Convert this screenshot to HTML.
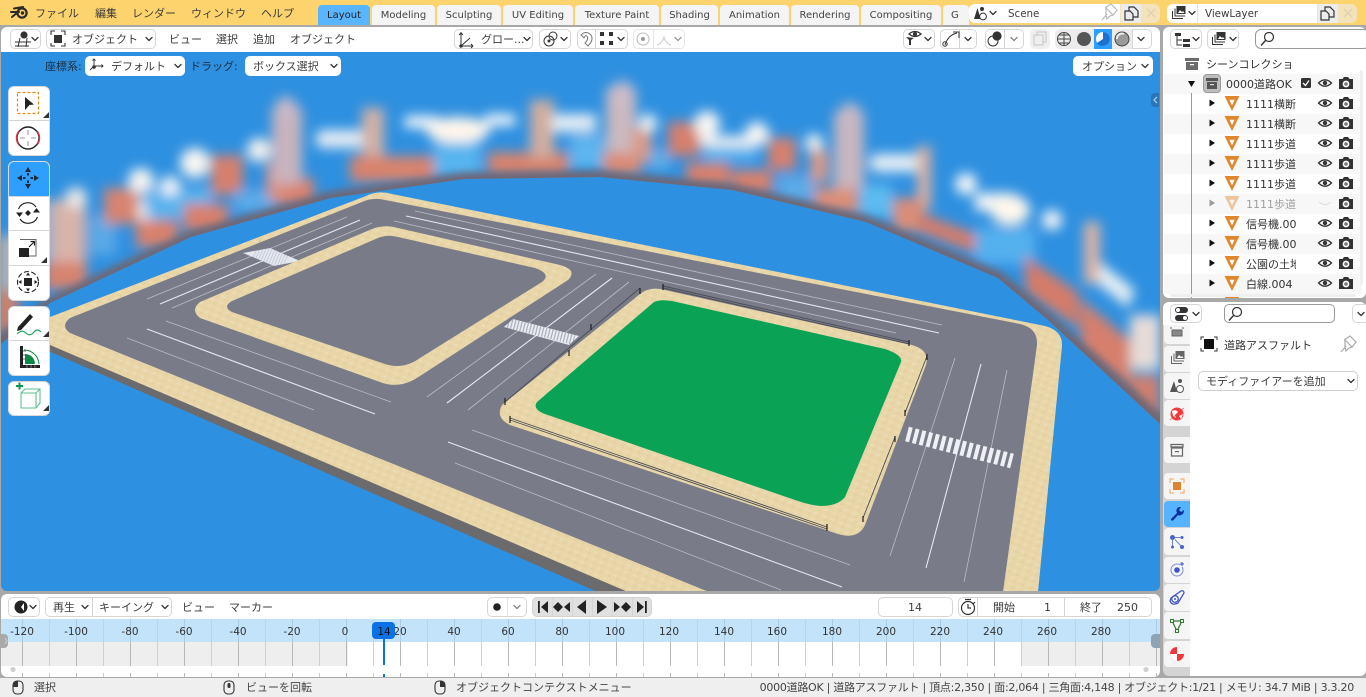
<!DOCTYPE html>
<html lang="ja"><head><meta charset="utf-8"><title>Blender</title>
<style>
html,body{margin:0;padding:0}
body{position:relative;width:1366px;height:697px;overflow:hidden;background:#a8a8a8;font:11px/14px "DejaVu Sans","Noto Sans CJK JP",sans-serif;color:#3c3c3c}
.a{position:absolute;box-sizing:border-box}
.t{position:absolute;white-space:nowrap;font-size:11px;line-height:14px;color:#3c3c3c;margin-top:1px}
.b{position:absolute;box-sizing:border-box;background:#fff;border:1px solid #d6d6d6;border-radius:5px}
.tab{position:absolute;top:5px;height:20px;background:#f4f4f4;border-radius:4px 4px 0 0;text-align:center;line-height:22px;color:#444;font-size:10px}
.c{position:absolute;left:1246px;width:50px;overflow:hidden;white-space:nowrap;line-height:14px;color:#333;margin-top:1px}
.r{position:absolute;left:1164px;width:198px;height:20px;background:#f7f7f7}
.pt{position:absolute;left:1164px;width:26px;background:#f5f5f5;border-radius:4px 0 0 4px}
.tool{position:absolute;left:8px;width:42px;background:#fff;border:1px solid #d9d9d9;border-radius:6px;box-sizing:border-box}
.div{position:absolute;background:#d5d5d5}
</style></head><body>

<!-- top bar -->
<div class="a" style="left:0;top:0;width:1366px;height:25px;background:#fdd36d"></div>
<span class="t" style="left:35px;top:6px">ファイル</span>
<span class="t" style="left:95px;top:6px">編集</span>
<span class="t" style="left:132px;top:6px">レンダー</span>
<span class="t" style="left:191px;top:6px">ウィンドウ</span>
<span class="t" style="left:261px;top:6px">ヘルプ</span>
<div class="tab" style="left:318px;width:52px;background:#5ab5ff;color:#222">Layout</div>
<div class="tab" style="left:372px;width:63px">Modeling</div>
<div class="tab" style="left:437px;width:64px">Sculpting</div>
<div class="tab" style="left:503px;width:70px">UV Editing</div>
<div class="tab" style="left:575px;width:84px">Texture Paint</div>
<div class="tab" style="left:661px;width:57px">Shading</div>
<div class="tab" style="left:720px;width:69px">Animation</div>
<div class="tab" style="left:791px;width:68px">Rendering</div>
<div class="tab" style="left:861px;width:80px">Compositing</div>
<div class="tab" style="left:943px;width:18px;text-align:left;padding-left:8px;overflow:hidden">G</div>

<!-- scene / view layer fields -->
<div class="a" style="left:969px;top:4px;width:191px;height:19px;background:#f3e3ba;border-radius:6px"></div>
<div class="a" style="left:969px;top:4px;width:32px;height:19px;background:#fff;border-radius:6px 0 0 6px"></div>
<div class="a" style="left:1001px;top:4px;width:119px;height:19px;background:#fff"></div>
<div class="a" style="left:1121px;top:4px;width:20px;height:19px;background:#ececec"></div>
<span class="t" style="left:1008px;top:6px;font-size:10.3px">Scene</span>
<div class="a" style="left:1167px;top:4px;width:190px;height:19px;background:#f3e3ba;border-radius:6px"></div>
<div class="a" style="left:1167px;top:4px;width:30px;height:19px;background:#fff;border-radius:6px 0 0 6px"></div>
<div class="a" style="left:1198px;top:4px;width:119px;height:19px;background:#fff"></div>
<div class="a" style="left:1318px;top:4px;width:20px;height:19px;background:#ececec"></div>
<span class="t" style="left:1205px;top:6px;font-size:10.3px">ViewLayer</span>

<!-- 3D viewport scene -->
<div class="a" style="left:1px;top:27px;width:1159px;height:564px;background:#2e90e0;border-radius:6px;overflow:hidden">
<svg width="1159" height="564" viewBox="1 27 1159 564" style="position:absolute;left:0;top:0">
<defs>
<clipPath id="sky"><path d="M0,52H1160V424L1048,320L998,278L866,222L732,190L600,177L465,179L331,198L191,237L50,303L0,345Z"/></clipPath>
<filter id="bl" x="-10%" y="-10%" width="120%" height="120%"><feGaussianBlur stdDeviation="6"/></filter>
<filter id="bl2" x="-10%" y="-10%" width="120%" height="120%"><feGaussianBlur stdDeviation="4"/></filter>
<pattern id="sd" width="9" height="7" patternUnits="userSpaceOnUse" patternTransform="rotate(22)"><rect width="9" height="7" fill="#e8d6a9"/><rect x="1" y="1" width="4" height="2" fill="#ecdcb4"/><rect x="5" y="4" width="3" height="2" fill="#e3d09f"/></pattern>
</defs>
<g clip-path="url(#sky)"><g filter="url(#bl)">
<!-- left -->
<rect x="0" y="235" width="14" height="70" fill="#cdb6ae"/>
<rect x="-5" y="290" width="24" height="44" fill="#c9816f"/>
<rect x="18" y="200" width="30" height="60" fill="#8fb7d5"/>
<rect x="50" y="200" width="36" height="66" fill="#d8b3aa"/>
<rect x="45" y="262" width="42" height="28" fill="#d7836e"/>
<circle cx="76" cy="198" r="11" fill="#e9e6e4"/>
<rect x="90" y="215" width="26" height="40" fill="#5aa9e6"/>
<rect x="104" y="188" width="36" height="36" fill="#d7846f"/>
<circle cx="141" cy="181" r="13" fill="#f6f4f2"/>
<rect x="138" y="200" width="18" height="30" fill="#f0eeee"/>
<rect x="146" y="188" width="66" height="30" fill="#59b4ee"/>
<circle cx="170" cy="186" r="10" fill="#f2f4f6"/><circle cx="195" cy="163" r="15" fill="#f8f5f2"/>
<rect x="211" y="155" width="32" height="40" fill="#d5806d"/>
<rect x="136" y="220" width="42" height="28" fill="#d9816c"/>
<rect x="184" y="204" width="44" height="28" fill="#d9806b"/>
<rect x="235" y="190" width="40" height="22" fill="#5cabe8"/>
<rect x="274" y="178" width="40" height="28" fill="#d9816c"/>
<rect x="266" y="163" width="22" height="34" fill="#da8f7e"/>
<circle cx="259" cy="150" r="12" fill="#f2f1f0"/>
<rect x="272" y="108" width="30" height="76" fill="#c9b3bd"/>
<circle cx="286" cy="108" r="11" fill="#c9b8c6"/>
<rect x="316" y="130" width="54" height="18" rx="7" fill="#e3ecf4"/>
<rect x="362" y="108" width="22" height="56" fill="#d2b0a6"/>
<rect x="350" y="156" width="86" height="26" fill="#d8836d"/>
<rect x="434" y="140" width="46" height="36" fill="#56b5ef"/>
<!-- middle -->
<rect x="404" y="116" width="36" height="12" rx="5" fill="#f5f8fb"/>
<ellipse cx="458" cy="130" rx="32" ry="13" fill="#fff6ec"/>
<rect x="484" y="114" width="32" height="12" rx="5" fill="#eff5fa"/>
<rect x="488" y="152" width="80" height="24" fill="#d8836d"/>
<rect x="530" y="100" width="24" height="58" fill="#d2ad9f"/>
<rect x="552" y="114" width="44" height="18" fill="#e6eef5"/>
<rect x="570" y="136" width="34" height="32" fill="#5cb6ef"/>
<rect x="606" y="88" width="30" height="76" fill="#cbb9c0"/>
<circle cx="622" cy="92" r="11" fill="#cbbcc8"/>
<rect x="603" y="153" width="38" height="22" fill="#dc8a72"/>
<rect x="632" y="128" width="20" height="34" fill="#d89a88"/>
<circle cx="648" cy="123" r="9" fill="#f3f4f4"/>
<rect x="650" y="150" width="20" height="20" fill="#5aaee9"/>
<rect x="668" y="122" width="32" height="34" fill="#d67f6d"/>
<circle cx="707" cy="124" r="13" fill="#f8f6f4"/><circle cx="757" cy="134" r="12" fill="#f8f6f4"/>
<rect x="700" y="136" width="60" height="10" fill="#f5f5f3"/>
<rect x="704" y="146" width="52" height="14" fill="#5fb6ef"/>
<rect x="686" y="163" width="44" height="24" fill="#da816c"/>
<rect x="732" y="170" width="40" height="24" fill="#d9816c"/>
<rect x="768" y="138" width="28" height="32" fill="#d6806e"/>
<rect x="778" y="176" width="36" height="26" fill="#5cabe8"/>
<circle cx="814" cy="143" r="9" fill="#f4f2f0"/>
<rect x="810" y="150" width="18" height="32" fill="#da9a8a"/>
<rect x="834" y="112" width="30" height="80" fill="#c8b6bf"/>
<circle cx="850" cy="114" r="11" fill="#c8b8c4"/>
<rect x="814" y="188" width="44" height="26" fill="#dd8f78"/>
<rect x="860" y="185" width="32" height="32" fill="#5cbcf0"/>
<rect x="870" y="154" width="50" height="18" rx="7" fill="#e6eef4"/>
<rect x="917" y="146" width="14" height="64" fill="#d9b0a2"/>
<rect x="893" y="198" width="30" height="34" fill="#da8d78"/>
<path d="M918,212L977,234V254L918,232Z" fill="#d57d6a"/>
<!-- right -->
<circle cx="966" cy="184" r="11" fill="#f3f5f7"/>
<rect x="975" y="193" width="40" height="18" fill="#f2f4f4"/>
<ellipse cx="1010" cy="210" rx="20" ry="15" fill="#fff7ec"/>
<circle cx="1052" cy="220" r="10" fill="#f2f4f6"/>
<rect x="975" y="228" width="60" height="36" fill="#55b0ee"/>
<path d="M1025,256L1078,292V328L1025,292Z" fill="#d57c69"/>
<rect x="1084" y="222" width="16" height="62" fill="#dcb4a6"/>
<path d="M1100,262L1135,290L1128,308L1098,284Z" fill="#e6eef3"/>
<path d="M1080,298L1130,340V392L1080,350Z" fill="#d67f6c"/>
<rect x="1130" y="315" width="30" height="55" fill="#e7dcd8"/>
<rect x="1130" y="375" width="30" height="45" fill="#cf8070"/>
</g>
<g filter="url(#bl2)"><path d="M-10,350L50,305L191,238L331,199L465,180L600,178L732,191L866,223L998,279L1048,321L1170,432" fill="none" stroke="#6f6673" stroke-width="15"/></g>
</g>
<!-- slab -->
<path d="M44,338L640,590V593H600L44,349Z" fill="#6b6a6d"/>
<path d="M366,196Q378,190 392,194L1045,326Q1063,331 1062,346L1038,592H628L50,345L28,331L50,317Z" fill="url(#sd)"/>
<path d="M362,202Q373,197 385,200L1020,324Q1038,328 1037,345L1003,592H709L70,333Q60,326 70,318Z" fill="#797c88"/>
<g fill="none">
<g stroke-width=".8" stroke="#cfd3dc" opacity=".75">
<path d="M147,299L347,217M172,308L372,223"/>
<path d="M415,211L942,325M394,221L896,333"/>
<path d="M166,321L391,402M127,338L314,410"/>
<path d="M427,397L596,274M468,410L629,282"/>
<path d="M472,430L850,565M455,463L781,590"/>
<path d="M955,358L890,556M1007,370L964,582"/>
</g>
<g stroke-width="1.1" stroke="#e4e8f0">
<path d="M160,304L360,220M406,216L939,333M147,329L375,414M447,403L612,278M448,442L842,587M981,364L926,568"/>
</g></g>
<!-- crosswalks -->
<path d="M243,253L270,248L300,261L274,266Z" fill="#e3e7f0"/>
<path d="M256,250L287,263" stroke="#797c88" stroke-width="22" stroke-dasharray=".8 2" opacity=".3"/>
<path d="M513,319L579,336L569,345L504,327Z" fill="#e9ecf3"/>
<path d="M508,323L574,340" stroke="#797c88" stroke-width="10" stroke-dasharray="1.2 2" opacity=".55"/>
<path d="M907,434L1012,461" stroke="#eef0f6" stroke-width="15" stroke-dasharray="4 3"/>
<!-- blocks -->
<path d="M372,229Q385,224 398,228L560,265Q578,270 568,280L420,376Q400,390 380,382L200,318Q190,310 200,302Z" fill="url(#sd)"/>
<path d="M378,238Q388,234 398,237L535,268Q552,274 542,282L420,358Q403,370 385,364L232,312Q222,307 232,301Z" fill="#797c88"/>
<path d="M640,294Q650,286 665,290L912,345Q930,350 926,365L865,525Q858,540 838,534L510,425Q495,418 502,405Z" fill="url(#sd)"/>
<path d="M537,402L654,302Q660,299 672,301L885,349Q903,355 901,362L845,497Q838,506 820,506Q810,505 798,501L545,414Q532,409 537,402Z" fill="#0aa356"/>
<!-- fences -->
<g fill="none" stroke="#4a4c55" stroke-width=".9">
<path d="M640,288L505,402M663,286L909,342M663,288L909,344M927,356L905,413M895,437L863,518M510,418L827,527M510,420L827,529"/>
</g>
<g stroke="#1e1e1e" stroke-width="1.2">
<path d="M640,288v6M663,284v6M909,340v6M927,354v6M905,410v6M895,436v6M863,516v6M510,416v7M827,524v7M505,398v7M591,324v6M569,350v6"/>
</g>
</svg></div>

<!-- viewport header -->
<div class="a" style="left:1px;top:27px;width:1159px;height:25px;background:#fff;border-radius:6px 6px 0 0"></div>
<div class="b" style="left:10px;top:29px;width:31px;height:20px"></div>
<div class="b" style="left:46px;top:29px;width:110px;height:20px"></div>
<span class="t" style="left:72px;top:32px">オブジェクト</span>
<span class="t" style="left:169px;top:32px">ビュー</span>
<span class="t" style="left:216px;top:32px">選択</span>
<span class="t" style="left:253px;top:32px">追加</span>
<span class="t" style="left:290px;top:32px">オブジェクト</span>
<div class="b" style="left:454px;top:29px;width:79px;height:20px"></div>
<span class="t" style="left:481px;top:32px">グロー...</span>
<div class="b" style="left:539px;top:29px;width:32px;height:20px"></div>
<div class="b" style="left:577px;top:29px;width:51px;height:20px"></div>
<div class="div" style="left:595px;top:30px;width:1px;height:18px"></div>
<div class="b" style="left:633px;top:29px;width:52px;height:20px;border-color:#e6e6e6"></div>
<div class="div" style="left:653px;top:30px;width:1px;height:18px;background:#e6e6e6"></div>
<div class="b" style="left:903px;top:29px;width:32px;height:20px"></div>
<div class="b" style="left:940px;top:29px;width:37px;height:20px"></div>
<div class="div" style="left:959px;top:30px;width:1px;height:18px"></div>
<div class="b" style="left:985px;top:29px;width:39px;height:20px"></div>
<div class="div" style="left:1004px;top:30px;width:1px;height:18px"></div>
<div class="a" style="left:1030px;top:29px;width:20px;height:20px;background:#efefef;border-radius:5px"></div>
<div class="a" style="left:1055px;top:29px;width:78px;height:20px;background:#ececec;border-radius:5px 0 0 5px"></div>
<div class="a" style="left:1094px;top:29px;width:18px;height:20px;background:#2e9fff"></div>
<div class="b" style="left:1132px;top:29px;width:20px;height:20px;border-radius:0 5px 5px 0"></div>

<!-- tool settings -->
<span class="t" style="left:45px;top:59px;color:#1c2c3c">座標系:</span>
<div class="b" style="left:85px;top:56px;width:100px;height:20px;border:0"></div>
<span class="t" style="left:111px;top:59px">デフォルト</span>
<span class="t" style="left:190px;top:59px;color:#1c2c3c">ドラッグ:</span>
<div class="b" style="left:245px;top:56px;width:96px;height:20px;border:0"></div>
<span class="t" style="left:253px;top:59px">ボックス選択</span>
<div class="b" style="left:1073px;top:56px;width:80px;height:20px;border:0"></div>
<span class="t" style="left:1082px;top:59px">オプション</span>
<div class="a" style="left:1151px;top:93px;width:8px;height:14px;background:#2775bb;border-radius:4px 0 0 4px"></div>

<!-- tool panels -->
<div class="tool" style="top:86px;height:70px"></div>
<div class="tool" style="top:161px;height:140px"></div>
<div class="a" style="left:9px;top:162px;width:40px;height:34px;background:#2e9fff;border-radius:5px 5px 0 0"></div>
<div class="tool" style="top:306px;height:70px"></div>
<div class="tool" style="top:381px;height:35px"></div>
<div class="div" style="left:9px;top:120px;width:40px;height:1px"></div>
<div class="div" style="left:9px;top:196px;width:40px;height:1px"></div>
<div class="div" style="left:9px;top:230px;width:40px;height:1px"></div>
<div class="div" style="left:9px;top:265px;width:40px;height:1px"></div>
<div class="div" style="left:9px;top:340px;width:40px;height:1px"></div>

<!-- outliner -->
<div class="a" style="left:1163px;top:27px;width:203px;height:271px;background:#fff;border-radius:6px;overflow:hidden"></div>
<div class="b" style="left:1170px;top:29px;width:32px;height:20px"></div>
<div class="b" style="left:1207px;top:29px;width:32px;height:20px"></div>
<div class="b" style="left:1255px;top:29px;width:115px;height:20px;border-color:#999;border-radius:6px"></div>
<div class="r" style="top:74px"></div><div class="r" style="top:114px"></div><div class="r" style="top:154px"></div><div class="r" style="top:194px"></div><div class="r" style="top:234px"></div><div class="r" style="top:274px"></div>
<div class="a" style="left:1203px;top:74px;width:18px;height:19px;background:#bdbdbd;border:1px solid #9a9a9a;border-radius:4px"></div>
<span class="t" style="left:1206px;top:57px;color:#333">シーンコレクショ</span>
<span class="t" style="left:1226px;top:77px;color:#333">0000道路OK</span>
<div class="c" style="top:97px">1111横断</div>
<div class="c" style="top:117px">1111横断</div>
<div class="c" style="top:137px">1111歩道</div>
<div class="c" style="top:157px">1111歩道</div>
<div class="c" style="top:177px">1111歩道</div>
<div class="c" style="top:197px;opacity:.45">1111歩道</div>
<div class="c" style="top:217px">信号機.00</div>
<div class="c" style="top:237px">信号機.00</div>
<div class="c" style="top:257px">公園の土地</div>
<div class="c" style="top:277px">白線.004</div>
<div class="div" style="left:1191px;top:93px;width:1px;height:205px;background:#9a9a9a"></div>
<div class="a" style="left:1360px;top:70px;width:3px;height:215px;background:#efefef;border-radius:2px"></div>
<div class="a" style="left:1170px;top:294px;width:186px;height:3px;background:#efefef;border-radius:2px"></div>

<!-- properties -->
<div class="a" style="left:1163px;top:302px;width:203px;height:374px;background:#d4d4d4;border-radius:6px;overflow:hidden"></div>
<div class="a" style="left:1190px;top:325px;width:176px;height:351px;background:#fff;border-radius:0 0 6px 0"></div>
<div class="a" style="left:1163px;top:302px;width:203px;height:23px;background:#fff;border-radius:6px 6px 0 0"></div>
<div class="b" style="left:1170px;top:304px;width:32px;height:19px"></div>
<div class="b" style="left:1224px;top:304px;width:111px;height:19px;border-color:#999;border-radius:5px"></div>
<div class="b" style="left:1352px;top:304px;width:20px;height:19px"></div>
<div class="pt" style="top:325px;height:19px;border-radius:0 0 0 4px"></div>
<div class="pt" style="top:346px;height:26px"></div>
<div class="pt" style="top:373px;height:26px"></div>
<div class="pt" style="top:400px;height:26px"></div>
<div class="pt" style="top:437px;height:26px"></div>
<div class="pt" style="top:473px;height:26px"></div>
<div class="pt" style="top:501px;height:26px;background:#55b3ff"></div>
<div class="pt" style="top:528px;height:27px"></div>
<div class="pt" style="top:557px;height:26px"></div>
<div class="pt" style="top:584px;height:27px"></div>
<div class="pt" style="top:612px;height:27px"></div>
<div class="pt" style="top:641px;height:26px"></div>
<span class="t" style="left:1224px;top:338px;color:#333">道路アスファルト</span>
<div class="b" style="left:1198px;top:371px;width:160px;height:20px;border-color:#cfcfcf"></div>
<span class="t" style="left:1206px;top:374px">モディファイアーを追加</span>

<!-- timeline -->
<div class="a" style="left:1px;top:594px;width:1159px;height:83px;background:#fff;border-radius:6px;overflow:hidden"></div>
<div class="a" style="left:1px;top:619px;width:1159px;height:23px;background:#c3e3fb"></div>
<div class="a" style="left:1px;top:642px;width:347px;height:24px;background:#eeeeee"></div>
<div class="a" style="left:1021px;top:642px;width:139px;height:24px;background:#eeeeee"></div>
<svg class="a" width="1159" height="58" viewBox="1 619 1159 58" style="left:1px;top:619px">
<defs>
<pattern id="p1" x="22" y="0" width="54" height="10" patternUnits="userSpaceOnUse"><rect x="0" width="1" height="10" fill="#a9cde8"/><rect x="27" width="1" height="10" fill="#b3d6ef"/></pattern>
<pattern id="p2" x="22" y="0" width="54" height="10" patternUnits="userSpaceOnUse"><rect x="0" width="1" height="10" fill="#b8b8b8"/><rect x="27" width="1" height="10" fill="#cfcfcf"/></pattern>
</defs>
<rect x="1" y="619" width="1159" height="23" fill="url(#p1)"/>
<rect x="1" y="642" width="1159" height="24" fill="url(#p2)"/>
<rect x="1" y="673" width="1159" height="4" fill="url(#p2)"/>
<rect x="9" y="666" width="1142" height="7" rx="3.5" fill="#fff"/>
<circle cx="13" cy="669.5" r="2.6" fill="#d0d0d0"/><circle cx="1146" cy="669.5" r="2.6" fill="#d0d0d0"/>
<g font-family="'DejaVu Sans',sans-serif" font-size="10.5" fill="#333" text-anchor="middle">
<text x="22" y="635">-120</text><text x="76" y="635">-100</text><text x="130" y="635">-80</text><text x="184" y="635">-60</text><text x="238" y="635">-40</text><text x="292" y="635">-20</text><text x="345" y="635">0</text><text x="400" y="635">20</text><text x="454" y="635">40</text><text x="508" y="635">60</text><text x="562" y="635">80</text><text x="615" y="635">100</text><text x="669" y="635">120</text><text x="724" y="635">140</text><text x="777" y="635">160</text><text x="832" y="635">180</text><text x="886" y="635">200</text><text x="940" y="635">220</text><text x="993" y="635">240</text><text x="1047" y="635">260</text><text x="1101" y="635">280</text>
</g>
<rect x="372" y="622" width="23" height="17" rx="4" fill="#0a72e6"/>
<rect x="383" y="639" width="2" height="26" fill="#0a72e6"/><rect x="383" y="674" width="2" height="3" fill="#0a72e6"/>
<text x="384" y="635" font-family="'DejaVu Sans',sans-serif" font-size="10.5" fill="#111" text-anchor="middle">14</text>
</svg>
<div class="b" style="left:8px;top:597px;width:32px;height:20px"></div>
<div class="b" style="left:45px;top:597px;width:127px;height:20px"></div>
<div class="div" style="left:92px;top:598px;width:1px;height:18px"></div>
<span class="t" style="left:53px;top:600px">再生</span>
<span class="t" style="left:99px;top:600px">キーイング</span>
<span class="t" style="left:182px;top:600px">ビュー</span>
<span class="t" style="left:229px;top:600px">マーカー</span>
<div class="b" style="left:487px;top:597px;width:40px;height:20px"></div>
<div class="div" style="left:507px;top:598px;width:1px;height:18px;background:#e4e4e4"></div>
<div class="a" style="left:532px;top:597px;width:120px;height:20px;background:#e0e0e0;border:1px solid #d2d2d2;border-radius:5px"></div>
<div class="div" style="left:552px;top:598px;width:1px;height:18px"></div><div class="div" style="left:572px;top:598px;width:1px;height:18px"></div><div class="div" style="left:592px;top:598px;width:1px;height:18px"></div><div class="div" style="left:612px;top:598px;width:1px;height:18px"></div><div class="div" style="left:632px;top:598px;width:1px;height:18px"></div>
<div class="b" style="left:878px;top:597px;width:75px;height:20px"></div>
<span class="t" style="left:908px;top:600px">14</span>
<div class="b" style="left:958px;top:597px;width:194px;height:20px"></div>
<div class="div" style="left:977px;top:598px;width:1px;height:18px"></div>
<div class="div" style="left:1064px;top:598px;width:1px;height:18px"></div>
<span class="t" style="left:993px;top:600px">開始</span>
<span class="t" style="left:1044px;top:600px">1</span>
<span class="t" style="left:1080px;top:600px">終了</span>
<span class="t" style="left:1117px;top:600px">250</span>
<div class="a" style="left:0;top:634px;width:8px;height:14px;background:#a9a9a9;border-radius:0 4px 4px 0"></div>
<div class="a" style="left:1151px;top:634px;width:9px;height:14px;background:#8ea4b4;border-radius:4px 0 0 4px"></div>

<!-- status bar -->
<div class="a" style="left:0;top:678px;width:1366px;height:19px;background:#efefef"></div>
<span class="t" style="left:34px;top:680px;color:#444">選択</span>
<span class="t" style="left:246px;top:680px;color:#444">ビューを回転</span>
<span class="t" style="left:456px;top:680px;color:#444">オブジェクトコンテクストメニュー</span>
<span class="t" style="right:12px;top:680px;color:#444;letter-spacing:-.26px">0000道路OK | 道路アスファルト | 頂点:2,350 | 面:2,064 | 三角面:4,148 | オブジェクト:1/21 | メモリ: 34.7 MiB | 3.3.20</span>

<!-- icon layer -->
<svg class="a" width="1366" height="697" viewBox="0 0 1366 697" style="left:0;top:0;pointer-events:none">
<defs>
<path id="ch" d="M-3,-1.5L0,1.5L3,-1.5" fill="none" stroke="#333" stroke-width="1.3" stroke-linecap="round" stroke-linejoin="round"/>
<g id="eye"><path d="M-6.5,0Q0,-6.5 6.5,0Q0,6.5 -6.5,0Z" fill="none" stroke="#333" stroke-width="1.3"/><circle r="2.2" fill="#333"/></g>
<g id="cam"><path d="M-7,-4H-3.5L-2,-6H2L3.5,-4H7V6H-7Z" fill="#333"/><circle cy="1" r="3.4" fill="#fff"/><circle cy="1" r="1.8" fill="#777"/></g>
<path id="tri" d="M-7.5,-7H7.5L0,8Z M-2.6,-3.2L0,2.4L2.6,-3.2Z" fill="#e0862c" fill-rule="evenodd"/>
<path id="arr" d="M-2.5,-3.5L3,0L-2.5,3.5Z" fill="#111"/>
<path id="cn" d="M-3,0L3,0L3,-6Z" fill="#333"/>
</defs>
<!-- blender logo -->
<g fill="none" stroke="#2a2a2a" stroke-linecap="round"><circle cx="22" cy="13" r="4.6" stroke-width="2.2"/><path d="M11,12H19M14,8.5L23,7M12,17L18,12" stroke-width="2"/></g><circle cx="22.5" cy="13" r="1.7" fill="#2a2a2a"/>

<!-- top right -->
<g transform="translate(979,13)"><path d="M-5,6L-1.5,-5L1.5,6Z" fill="#333"/><circle cx="3" cy="-4" r="2" fill="#333"/><circle cx="4" cy="3.5" r="3.4" fill="#fff" stroke="#333"/></g><use href="#ch" x="993" y="13"/>
<path d="M1102,20L1107,14M1106,8L1113,15L1110,16L1107,19L1106,16ZM1105,8L1111,4L1117,10L1113,15" fill="none" stroke="#bbb" stroke-width="1.2"/>
<path d="M1129,11V7H1134L1138,11V17H1133M1125,11H1130L1133,14V20H1125Z" fill="none" stroke="#333" stroke-width="1.2"/>
<path d="M1147,9L1155,17M1155,9L1147,17" stroke="#e2d2ac" stroke-width="1.3"/>
<g transform="translate(1178,13)"><path d="M-6,-2H-5V5H5V6H-6Z M-3.5,-4.5H-2.5V2.500H7V3.500H-3.5Z" fill="#333"/><rect x="-1.500" y="-7" width="9" height="8" fill="#333"/><path d="M0,0L2,-3L4,-1L5,-2L6.500,0Z" fill="#fff"/></g><use href="#ch" x="1192" y="13"/>
<path d="M1325,11V7H1330L1334,11V17H1329M1321,11H1326L1329,14V20H1321Z" fill="none" stroke="#333" stroke-width="1.2"/>
<path d="M1344,9L1352,17M1352,9L1344,17" stroke="#e2d2ac" stroke-width="1.3"/>

<!-- 3D header icons -->
<g stroke="#333" fill="none"><path d="M15,42H31M15,46H29M20,38L18,47M27,38L26,47"/></g><circle cx="24" cy="35" r="3.6" fill="#333"/><use href="#ch" x="35" y="39"/>
<path d="M51,35V31H55M61,31H65V35M65,43V46H61M55,46H51V43" fill="none" stroke="#333" stroke-width="1.1"/><rect x="54" y="35" width="8" height="8" fill="#333"/><use href="#ch" x="149" y="39"/>
<g fill="none" stroke="#333"><path d="M461,32V46H473M461,46L470,38M461,33L459,35M461,33L463,35M473,46L471,44M473,46L471,48"/></g><circle cx="461" cy="46" r="1.700" fill="#333"/><use href="#ch" x="527" y="39"/>
<circle cx="549" cy="41" r="5" fill="none" stroke="#333"/><circle cx="553" cy="36" r="4" fill="none" stroke="#333"/><circle cx="549" cy="41" r="1.5" fill="#333"/><use href="#ch" x="564" y="39"/>
<path d="M581,35Q586,30 591,35Q594,40 588,46L585,43Q589,39 587,36Q585,35 584,38Z" fill="none" stroke="#777"/>
<path d="M600,32h4v4h-4zM609,32h4v4h-4zM600,41h4v4h-4zM609,41h4v4h-4z" fill="#333"/><use href="#ch" x="621" y="39"/>
<circle cx="643" cy="39" r="6" fill="none" stroke="#bbb"/><circle cx="643" cy="39" r="2" fill="#999"/>
<path d="M657,45Q662,44 664,37Q666,44 671,45" fill="none" stroke="#ccc"/><use href="#ch" x="678" y="39" opacity=".5"/>
<g transform="translate(915,37)"><path d="M-6,-3Q0,-8 6,-3Q0,2 -6,-3Z" fill="none" stroke="#333" stroke-width="1.300"/><circle cy="-3" r="2" fill="#333"/><path d="M-9,0L-1,1L-4,3L-4,8L-6,8L-6,3Z" fill="#333"/></g><use href="#ch" x="928" y="39"/>
<path d="M945,45Q948,35 957,33M953,32H959V38" fill="none" stroke="#333"/><circle cx="945" cy="44" r="2.200" fill="none" stroke="#333"/><use href="#ch" x="968" y="39"/>
<circle cx="993" cy="41" r="5" fill="#fff" stroke="#333"/><circle cx="997" cy="36" r="4.600" fill="#333"/><use href="#ch" x="1014" y="39" opacity=".6"/>
<g fill="none" stroke="#c4c4c4"><rect x="1034" y="35" width="9" height="10"/><path d="M1037,35V32H1046V42H1043"/></g>
<g fill="none" stroke="#444"><circle cx="1064" cy="39" r="6.500"/><path d="M1057.500,39H1070.500M1064,32.500V45.500M1059,35H1069M1059,43H1069"/></g>
<circle cx="1084" cy="39" r="7" fill="#555"/>
<circle cx="1103" cy="39" r="7" fill="#fff"/><path d="M1103,39V32A7,7 0 0 1 1103,46Q1098,46 1097,43Z" fill="#1b73cf"/>
<circle cx="1122" cy="39" r="7" fill="#9a9a9a" stroke="#444"/><path d="M1117,39A5,5 0 0 1 1124,34" fill="none" stroke="#eee" stroke-width="2"/>
<use href="#ch" x="1141" y="39"/>

<!-- tool settings icons -->
<g stroke="#333" fill="none" stroke-width=".9"><path d="M94,66V59M92.500,60.500L94,59L95.500,60.500M94,66L90,70M94,66H103M101.500,64.500L103,66L101.500,67.500"/></g><circle cx="94" cy="67" r="1.800" fill="#333"/>
<use href="#ch" x="178" y="66"/><use href="#ch" x="334" y="66"/><use href="#ch" x="1145" y="66"/>
<path d="M1157,97L1154,100L1157,103" fill="none" stroke="#a8c7e2" stroke-width="1.300"/>

<!-- tools -->
<rect x="17.500" y="92.500" width="21" height="21" fill="none" stroke="#e08a10" stroke-width="1.200" stroke-dasharray="3 2"/>
<path d="M25,97L34,104.500L29.500,105L25,110Z" fill="#222"/>
<circle cx="28" cy="138" r="11" fill="none" stroke="#222" stroke-width="1.400"/>
<path d="M19,131A11,11 0 0 0 19,145M37,145A11,11 0 0 0 37,131" fill="none" stroke="#d23a4a" stroke-width="1.400"/>
<path d="M28,130V135M28,141V146M20,138H25M31,138H36" stroke="#aaa" stroke-width="1.300"/>
<!-- move -->
<g fill="#1c2a3a"><path d="M28,167L31,172H25ZM28,189L25,184H31ZM17,178L22,175V181ZM39,178L34,175V181Z"/><rect x="27" y="173" width="2" height="2.500"/><rect x="27" y="180.500" width="2" height="2.500"/><rect x="23" y="177" width="2.500" height="2"/><rect x="30.500" y="177" width="2.500" height="2"/></g>
<!-- rotate -->
<g fill="none" stroke="#222" stroke-width="1.100"><path d="M18.500,209A10,10 0 0 1 36,207M37.500,217A10,10 0 0 1 20,219"/></g>
<path d="M28,210L31,213L28,216L25,213ZM33,212.500L40,212.500L36.500,208ZM16,212.500L23,212.500L19.500,217Z" fill="#222"/>
<!-- scale -->
<path d="M20,239.500H36V256H29" fill="none" stroke="#666"/><rect x="19" y="248" width="10" height="9" fill="#222"/><path d="M29,247L34,242M30.500,241.500H34.500V245.500" fill="none" stroke="#222" stroke-width="1.200"/>
<use href="#cn" x="44" y="263"/><use href="#cn" x="46" y="118"/>
<!-- transform -->
<circle cx="28" cy="282" r="10.500" fill="none" stroke="#222" stroke-width="1.100" stroke-dasharray="5 2.500"/><rect x="24" y="278" width="8" height="8" fill="#222"/>
<path d="M28,272.500L30,275.500H26ZM28,291.500L26,288.500H30ZM18.500,282L21.500,280V284ZM37.500,282L34.500,280V284Z" fill="#222"/>
<!-- annotate -->
<path d="M18,327L30,314L33,317L21,330L17,331Z" fill="#222"/>
<path d="M17,334Q22,329 26,333T34,332Q37,328 41,332" fill="none" stroke="#2aa868" stroke-width="1.200"/><use href="#cn" x="46" y="337"/>
<!-- measure -->
<path d="M20,346H23V365H40V368H20Z" fill="#222"/><path d="M23,351H26M23,355H26M23,359H26M27,365V368M31,365V368M35,365V368" stroke="#777"/>
<path d="M25,362V354A10,10 0 0 1 35,364H25Z" fill="#0b8a46"/><path d="M24,350A15,15 0 0 1 39,364" fill="none" stroke="#0b8a46"/>
<!-- add -->
<g fill="none" stroke="#5cc28e" stroke-width="1.100"><path d="M21,393H36V408H21ZM21,393L25,389H40V403L36,408M36,393L40,389"/></g>
<path d="M16,386H23M19.500,382.500V389.500" stroke="#0a9650" stroke-width="2"/><use href="#cn" x="46" y="411"/>

<!-- outliner header -->
<g fill="#333"><rect x="1175" y="33" width="6" height="3"/><rect x="1183" y="39" width="7" height="3"/><rect x="1183" y="44" width="7" height="3"/></g><path d="M1177,36V45H1182M1177,40H1182" fill="none" stroke="#333"/><use href="#ch" x="1196" y="39"/>
<g transform="translate(1218,39)"><path d="M-6,-2H-5V5H5V6H-6Z M-3.5,-4.5H-2.5V2.500H7V3.500H-3.5Z" fill="#333"/><rect x="-1.500" y="-7" width="9" height="8" fill="#333"/><path d="M0,0L2,-3L4,-1L5,-2L6.500,0Z" fill="#fff"/></g><use href="#ch" x="1233" y="39"/>
<circle cx="1269" cy="37" r="4.500" fill="none" stroke="#333" stroke-width="1.200"/><path d="M1265.500,40.500L1261,45.500" stroke="#333" stroke-width="1.400"/>
<path d="M1185,58H1199V61H1185ZM1186,62H1198V70H1186Z" fill="#6c6c6c"/><rect x="1190" y="64" width="4" height="1.300" fill="#fff"/>
<path d="M1206,78H1218V81H1206ZM1207,82H1217V89H1207Z" fill="#555"/><rect x="1210" y="84" width="4" height="1.200" fill="#ddd"/>
<path d="M1188,81H1195L1191.500,87Z" fill="#111"/>
<rect x="1301" y="78" width="10" height="10" rx="1.500" fill="#333"/><path d="M1303,83L1305.500,85.500L1309,80.500" fill="none" stroke="#fff" stroke-width="1.300"/>
<use href="#eye" x="1325" y="83"/><use href="#cam" x="1346" y="83"/>
<use href="#arr" x="1212" y="103"/><use href="#tri" x="1232" y="103"/><use href="#eye" x="1325" y="103"/><use href="#cam" x="1346" y="103"/>
<use href="#arr" x="1212" y="123"/><use href="#tri" x="1232" y="123"/><use href="#eye" x="1325" y="123"/><use href="#cam" x="1346" y="123"/>
<use href="#arr" x="1212" y="143"/><use href="#tri" x="1232" y="143"/><use href="#eye" x="1325" y="143"/><use href="#cam" x="1346" y="143"/>
<use href="#arr" x="1212" y="163"/><use href="#tri" x="1232" y="163"/><use href="#eye" x="1325" y="163"/><use href="#cam" x="1346" y="163"/>
<use href="#arr" x="1212" y="183"/><use href="#tri" x="1232" y="183"/><use href="#eye" x="1325" y="183"/><use href="#cam" x="1346" y="183"/>
<use href="#arr" x="1212" y="203" opacity=".4"/><use href="#tri" x="1232" y="203" opacity=".45"/><path d="M1319,202Q1325,207 1331,202" fill="none" stroke="#ddd"/><use href="#cam" x="1346" y="203"/>
<use href="#arr" x="1212" y="223"/><use href="#tri" x="1232" y="223"/><use href="#eye" x="1325" y="223"/><use href="#cam" x="1346" y="223"/>
<use href="#arr" x="1212" y="243"/><use href="#tri" x="1232" y="243"/><use href="#eye" x="1325" y="243"/><use href="#cam" x="1346" y="243"/>
<use href="#arr" x="1212" y="263"/><use href="#tri" x="1232" y="263"/><use href="#eye" x="1325" y="263"/><use href="#cam" x="1346" y="263"/>
<use href="#arr" x="1212" y="283"/><use href="#tri" x="1232" y="283"/><use href="#eye" x="1325" y="283"/><use href="#cam" x="1346" y="283"/>
<rect x="1225" y="297" width="14" height="1" fill="#e0862c"/>

<!-- properties header -->
<g fill="#333"><rect x="1175" y="307" width="13" height="6" rx="3"/><rect x="1175" y="315" width="13" height="6" rx="3"/></g><circle cx="1178" cy="310" r="2" fill="#fff"/><circle cx="1185" cy="318" r="2" fill="#fff"/><use href="#ch" x="1196" y="314"/>
<circle cx="1237" cy="312" r="4.500" fill="none" stroke="#333" stroke-width="1.200"/><path d="M1233.500,315.500L1229,320.500" stroke="#333" stroke-width="1.400"/>
<use href="#ch" x="1361" y="314"/>
<path d="M1204,337H1201V340M1214,337H1217V340M1201,348V351H1204M1217,348V351H1214" fill="none" stroke="#333"/><rect x="1204" y="339" width="10" height="10" fill="#111"/>
<path d="M1341,352L1346,346M1345,340L1352,347L1349,348L1346,351L1345,348ZM1344,340L1350,336L1356,342L1352,347" fill="none" stroke="#aaa" stroke-width="1.200"/>
<use href="#ch" x="1351" y="381"/>
<!-- tab icons -->
<path d="M1171,327v2M1183,327v2M1172,330H1182V336H1172Z" fill="#888" stroke="#666"/>
<g transform="translate(1177,358)"><path d="M-6,-2H-5V5H5V6H-6Z M-3.5,-4.5H-2.5V2.500H7V3.500H-3.5Z" fill="#666"/><rect x="-1.500" y="-7" width="9" height="8" fill="#666"/><path d="M0,0L2,-3L4,-1L5,-2L6.500,0Z" fill="#fff"/></g>
<g transform="translate(1177,386)"><path d="M-7,6L-3,-5L0,6Z" fill="#555"/><circle cx="3" cy="-5" r="2" fill="#555"/><circle cx="3" cy="3" r="3.500" fill="#fff" stroke="#555"/></g>
<circle cx="1177" cy="414" r="6.500" fill="#f23a3a"/><path d="M1172,411Q1176,409 1178,412L1175,415L1176,418L1173,416ZM1179,416L1183,414L1181,419Z" fill="#fff"/><path d="M1170,420L1184,408" stroke="#f23a3a" opacity=".6"/>
<path d="M1171,444.500H1183V447H1171ZM1171.500,448H1182.500V456H1171.500Z" fill="none" stroke="#666" stroke-width="1.200"/><rect x="1175" y="451" width="4" height="1.200" fill="#666"/>
<path d="M1170,483V479H1174M1180,479H1184V483M1184,489V493H1180M1174,493H1170V489" fill="none" stroke="#e9a95e"/><rect x="1173" y="482" width="8" height="8" fill="#db8530"/>
<path d="M1171,519L1177,513Q1175,509 1179,507L1181,507L1179,510L1181,512L1184,510Q1184,514 1181,515Q1179,516 1178,515L1173,520.500Q1171,521 1171,519Z" fill="#0a2f9e"/>
<g fill="#4a63c8"><circle cx="1172.500" cy="537.500" r="2.500"/><circle cx="1172.500" cy="547" r="1.500"/><circle cx="1182" cy="537.500" r="1.500"/><circle cx="1182" cy="547" r="2"/></g><path d="M1175,537.500H1181M1172.500,540V546M1175,539.500L1181,546" stroke="#6f85d6"/>
<circle cx="1177" cy="570" r="6" fill="none" stroke="#7d90dc"/><rect x="1180" y="562" width="5" height="5" rx="2.500" fill="#fff"/><circle cx="1177" cy="570" r="2.800" fill="#3f57c6"/><circle cx="1182" cy="564" r="1.700" fill="#5f78d2"/>
<path d="M1171,598L1181,591Q1184,590 1184,593L1178,603Q1172,606 1170,601Z" fill="none" stroke="#3f57c6" stroke-width="1.300"/><circle cx="1175" cy="599" r="3.300" fill="none" stroke="#3f57c6" stroke-width="1.300"/><circle cx="1175" cy="599" r="1" fill="#3f57c6"/>
<path d="M1172,621H1182L1177,631Z" fill="none" stroke="#2f7a2f" stroke-width="1.200"/><g fill="#fff" stroke="#2f7a2f"><rect x="1170.500" y="619.500" width="3" height="3"/><rect x="1180.500" y="619.500" width="3" height="3"/><rect x="1175.500" y="629.500" width="3" height="3"/></g>
<circle cx="1177" cy="654" r="7" fill="#f0383c"/><path d="M1177,654H1170A7,7 0 0 0 1177,661ZM1177,654V647A7,7 0 0 1 1184,654Z" fill="#fff"/>

<!-- timeline icons -->
<circle cx="21" cy="607" r="6.500" fill="#222"/><path d="M24,603L21,607L24,611Z" fill="#fff"/><use href="#ch" x="33" y="607"/>
<use href="#ch" x="85" y="607"/><use href="#ch" x="165" y="607"/>
<circle cx="497" cy="607" r="3.800" fill="#222"/><use href="#ch" x="517" y="607" opacity=".6"/>
<g fill="#222"><path d="M538,601h1.800v12H538ZM548,601V613L541,607Z"/><path d="M553,607L558,602L563,607L558,612ZM570,602V612L564,607Z"/><path d="M586,600V614L577,607Z"/><path d="M597,600V614L607,607Z"/><path d="M614,602V612L620,607ZM621,607L626,602L631,607L626,612Z"/><path d="M637,601V613L644,607ZM645,601h1.800v12H645Z"/></g>
<circle cx="968" cy="608" r="6.500" fill="none" stroke="#333" stroke-width="1.200"/><path d="M968,604V608H971M965,599.500H971M975,602L973,604" fill="none" stroke="#333" stroke-width="1.200"/>
<path d="M5,638L7,641L5,644" fill="none" stroke="#c8c8c8" stroke-width="1.200"/>

<!-- status icons -->
<g fill="none" stroke="#333" stroke-width="1.100"><rect x="13" y="681" width="10" height="13" rx="4"/><rect x="224" y="681" width="10" height="13" rx="4"/><rect x="435" y="681" width="10" height="13" rx="4"/></g>
<path d="M18,681H17A4,4 0 0 0 13,685V687H18Z" fill="#333"/><rect x="227.500" y="683" width="3" height="5" rx="1.500" fill="#333"/><path d="M440,681H441A4,4 0 0 1 445,685V687H440Z" fill="#333"/>
</svg>
</body></html>
